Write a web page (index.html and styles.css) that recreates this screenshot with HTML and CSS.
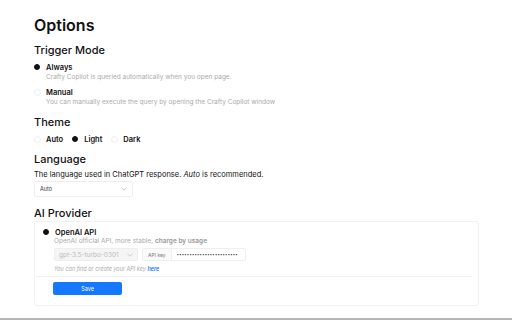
FILE: index.html
```html
<!DOCTYPE html>
<html lang="en">
<head>
    <meta charset="UTF-8">
    <title>Options</title>
    <link rel="stylesheet" href="styles.css">
</head>
<body>
    <div class="page">
        <h1 class="title">Options</h1>

        <h2 class="section">Trigger Mode</h2>
        <div class="option">
            <div class="radio-line"><span class="radio checked"></span><span class="radio-label">Always</span></div>
            <p class="option-desc">Crafty Copilot is queried automatically when you open page.</p>
        </div>
        <div class="option last">
            <div class="radio-line"><span class="radio"></span><span class="radio-label">Manual</span></div>
            <p class="option-desc">You can manually execute the query by opening the Crafty Copilot window</p>
        </div>

        <h2 class="section">Theme</h2>
        <div class="theme-row">
            <div class="radio-line"><span class="radio"></span><span class="radio-label">Auto</span></div>
            <div class="radio-line"><span class="radio checked"></span><span class="radio-label">Light</span></div>
            <div class="radio-line"><span class="radio"></span><span class="radio-label">Dark</span></div>
        </div>

        <h2 class="section">Language</h2>
        <p class="lang-desc">The language used in ChatGPT response. <i>Auto</i> is recommended.</p>
        <div class="select lang-select">
            <span>Auto</span>
            <svg class="chevron" width="6" height="4" viewBox="0 0 6 4"><path d="M0.5 0.8 L3 3.2 L5.5 0.8" fill="none" stroke="#aaa" stroke-width="0.7"/></svg>
        </div>

        <h2 class="section">AI Provider</h2>
        <div class="card">
            <div class="card-body">
                <div class="radio-line"><span class="radio checked"></span><span class="radio-label">OpenAI API</span></div>
                <p class="option-desc">OpenAI official API, more stable, <b>charge by usage</b></p>
                <div class="api-row">
                    <div class="select model-select">
                        <span>gpt-3.5-turbo-0301</span>
                        <svg class="chevron" width="6" height="4" viewBox="0 0 6 4"><path d="M0.5 0.8 L3 3.2 L5.5 0.8" fill="none" stroke="#bbb" stroke-width="0.7"/></svg>
                    </div>
                    <div class="key-group">
                        <span class="key-addon">API key</span>
                        <span class="key-input">••••••••••••••••••••••••</span>
                    </div>
                </div>
                <p class="hint">You can find or create your API key <a href="#">here</a></p>
            </div>
            <div class="card-footer">
                <button class="save">Save</button>
            </div>
        </div>
    </div>
    <div class="bottom-bar"></div>
</body>
</html>
```

FILE: styles.css
```css
/* Options page */

body {
    margin: 0;
    font-family: Inter, "Noto Sans", sans-serif;
    background-color: #fff;
    color: #111;
    height: 320px;
    display: flex;
    flex-direction: column;
    overflow: hidden;
}

.page {
    flex: 1;
    padding: 15px 33px 0 34px;
}

.title {
    font-size: 16px;
    font-weight: 600;
    margin: 0 0 8px 0;
    line-height: 20px;
}

.section {
    font-size: 11px;
    font-weight: 500;
    margin: 0 0 5px 0;
    line-height: 14px;
}

.option {
    margin-bottom: 5px;
}

.option.last {
    margin-bottom: 8px;
}

.radio-line {
    display: flex;
    align-items: center;
    height: 10px;
}

.radio {
    width: 7px;
    height: 7px;
    border-radius: 50%;
    border: 0.5px solid #eee;
    box-sizing: border-box;
    margin: 0 5px 0 0;
}

.radio.checked {
    background-color: #111;
    border-color: #111;
    width: 6px;
    height: 6px;
    margin: 0 6px 0 0;
}

.radio-label {
    font-size: 7.5px;
    font-weight: 600;
}

.option-desc {
    font-size: 6.5px;
    color: #aaa;
    margin: 0 0 0 12px;
    line-height: 10px;
}

.option-desc b {
    font-weight: 600;
    color: #999;
}

.theme-row {
    display: flex;
    gap: 9px;
    margin-bottom: 8px;
}

.lang-desc {
    font-size: 7.5px;
    margin: -1px 0 1px 0;
    line-height: 10px;
}

.select {
    display: flex;
    align-items: center;
    justify-content: space-between;
    box-sizing: border-box;
    border: 1px solid #eee;
    border-radius: 2px;
    font-size: 5.5px;
}

.lang-select {
    width: 99px;
    height: 16px;
    padding: 0 5px;
    margin-bottom: 9px;
    color: #333;
}

.card {
    border: 1px solid #f1f1f1;
    border-radius: 3px;
    width: 445px;
    box-sizing: border-box;
    margin-top: -4px;
}

.card-body {
    padding: 5px 9px 3px 8px;
    border-bottom: 1px solid #f1f1f1;
    margin-right: 6px;
}

.card .option-desc {
    margin-left: 11px;
    margin-bottom: 2px;
    line-height: 9px;
}

.api-row {
    display: flex;
    gap: 4px;
    margin-left: 11px;
}

.model-select {
    width: 84px;
    height: 13px;
    padding: 0 4px;
    background-color: #f5f5f5;
    color: #bbb;
    font-size: 6.5px;
}

.key-group {
    display: flex;
    height: 13px;
    border: 1px solid #eee;
    border-radius: 2px;
    box-sizing: border-box;
    width: 104px;
}

.key-addon {
    font-size: 5px;
    color: #777;
    padding: 0 5px;
    border-right: 1px solid #eee;
    display: flex;
    align-items: center;
    background-color: #fafafa;
}

.key-input {
    font-size: 4px;
    letter-spacing: 0.3px;
    color: #333;
    padding: 0 5px;
    display: flex;
    align-items: center;
}

.hint {
    font-size: 5.5px;
    font-style: italic;
    color: #aaa;
    margin: 4px 0 0 11px;
    line-height: 8px;
}

.hint a {
    color: #1677ff;
    font-weight: 600;
    text-decoration: none;
}

.card-footer {
    padding: 5px 0 10px 18px;
}

.save {
    display: block;
    width: 69px;
    height: 13px;
    background-color: #1677ff;
    color: #fff;
    border: none;
    border-radius: 2px;
    font-family: inherit;
    font-size: 5.5px;
    padding: 0;
}

.bottom-bar {
    height: 2px;
    background-color: #b5b5b5;
}
```
